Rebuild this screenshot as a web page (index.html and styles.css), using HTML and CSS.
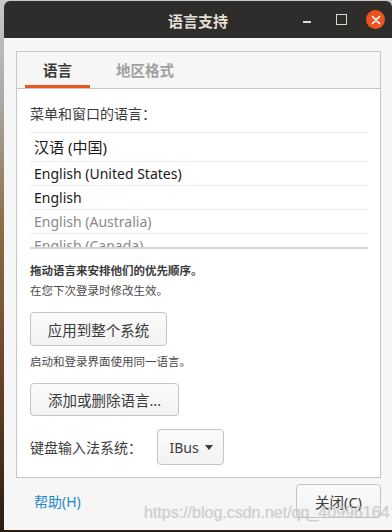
FILE: index.html
```html
<!DOCTYPE html>
<html lang="zh-CN">
<head>
    <meta charset="UTF-8">
    <meta name="viewport" content="width=device-width, initial-scale=1.0">
    <title>语言支持</title>
    <link rel="stylesheet" href="styles.css">
</head>
<body>
    <div class="window">
        <div class="titlebar">
            <div></div>
            <div class="title">语言支持</div>
            <div class="controls">
                <span class="ctl min"></span>
                <span class="ctl max"></span>
                <span class="ctl close">
                    <svg width="10" height="10" viewBox="0 0 10 10">
                        <path d="M1.5 1.5 L8.5 8.5 M8.5 1.5 L1.5 8.5" stroke="#fff" stroke-width="1.6" stroke-linecap="round"/>
                    </svg>
                </span>
            </div>
        </div>

        <div class="body">
            <div class="notebook">
                <div class="tabs">
                    <div class="tab active">语言</div>
                    <div class="tab">地区格式</div>
                </div>
                <div class="page">
                    <div class="label">菜单和窗口的语言：</div>
                    <div class="lang-list">
                        <div class="lang-row cjk">汉语 (中国)</div>
                        <div class="lang-row">English (United States)</div>
                        <div class="lang-row">English</div>
                        <div class="lang-row muted">English (Australia)</div>
                        <div class="lang-row muted">English (Canada)</div>
                    </div>
                    <div class="hint">
                        <div class="bold">拖动语言来安排他们的优先顺序。</div>
                        <div>在您下次登录时修改生效。</div>
                    </div>
                    <button class="btn apply">应用到整个系统</button>
                    <div class="hint note">启动和登录界面使用同一语言。</div>
                    <button class="btn add">添加或删除语言...</button>
                    <div class="im-row">
                        <span>键盘输入法系统：</span>
                        <button class="combo">IBus <span class="arrow"></span></button>
                    </div>
                </div>
            </div>

            <div class="actions">
                <a class="help">帮助(H)</a>
                <button class="btn close-btn">关闭(C)</button>
            </div>
        </div>

        <div class="watermark">https://blog.csdn.net/qq_40996164</div>
    </div>
</body>
</html>
```

FILE: styles.css
```css
* {
    box-sizing: border-box;
}

body {
    margin: 0;
    width: 392px;
    height: 532px;
    padding: 1px 0 2px 4px;
    overflow: hidden;
    background: linear-gradient(180deg, #c9c9c9 0%, #aaa79f 20%, #8d6c47 42%, #6a4526 70%, #2b1c10 100%);
    font-family: 'Noto Sans', 'Noto Sans CJK SC', sans-serif;
    color: #3c3c3c;
}

.window {
    position: relative;
    height: 100%;
    display: flex;
    flex-direction: column;
    background: #f6f6f6;
    border-radius: 6px 6px 0 0;
    overflow: hidden;
}

.titlebar {
    height: 37px;
    flex: none;
    background: #2f2d2c;
    display: grid;
    grid-template-columns: 1fr auto 1fr;
    align-items: center;
}

.title {
    color: #e2ded6;
    font-size: 15px;
    font-weight: bold;
    padding-top: 1px;
}

.controls {
    display: flex;
    justify-content: flex-end;
    align-items: center;
    gap: 16px;
    padding-right: 7px;
}

.ctl {
    width: 18px;
    height: 18px;
    display: flex;
    align-items: center;
    justify-content: center;
}

.ctl.min::after {
    content: '';
    width: 8px;
    height: 2px;
    margin-top: 5px;
    background: #dcd8d0;
}

.ctl.max::after {
    content: '';
    width: 9px;
    height: 9px;
    border: 1.5px solid #dcd8d0;
}

.ctl.close {
    width: 19px;
    height: 19px;
    border-radius: 50%;
    background: #e9541f;
}

.body {
    flex: 1;
    display: flex;
    flex-direction: column;
    padding: 13px 11px 0 12px;
}

.notebook {
    border: 1px solid #c6c6c6;
    background: #fff;
}

.tabs {
    height: 37px;
    display: flex;
    gap: 8px;
    padding-left: 8px;
    background: #f6f6f6;
    border-bottom: 1px solid #c6c6c6;
}

.tab {
    padding: 0 18px;
    font-size: 14.5px;
    font-weight: bold;
    color: #a0a0a0;
    display: flex;
    align-items: center;
    padding-top: 1px;
    border-bottom: 3px solid transparent;
}

.tab.active {
    color: #3c3c3c;
    border-bottom-color: #e9541f;
}

.page {
    padding: 14px 12px 12px 13px;
}

.label {
    font-size: 14px;
    line-height: 22px;
}

.lang-list {
    margin-top: 7px;
    height: 117px;
    overflow: hidden;
    border-top: 1px solid #eeeeee;
    border-bottom: 2px solid #d4d4d4;
}

.lang-row {
    height: 24px;
    padding-left: 4px;
    border-bottom: 1px solid #eeeeee;
    font-size: 14px;
    line-height: 23px;
    color: #1a1a1a;
}

.lang-row.cjk {
    height: 29px;
    line-height: 28px;
    font-size: 15px;
}

.lang-row.muted {
    color: #8a8a8a;
}

.hint {
    font-size: 11.5px;
    line-height: 20px;
    color: #4a4a4a;
    margin-top: 12px;
}

.hint .bold {
    font-weight: bold;
    color: #3a3a3a;
}

.hint.note {
    margin-top: 6px;
}

.btn {
    display: block;
    font-family: inherit;
    font-size: 14.5px;
    color: #3c3c3c;
    background: linear-gradient(180deg, #fbfbfb, #f2f2f2);
    border: 1px solid #c3c3c3;
    border-radius: 4px;
    padding: 0;
    margin-top: 11px;
}

.btn.apply {
    width: 137px;
    height: 34px;
}

.btn.add {
    width: 149px;
    height: 33px;
}

.im-row {
    margin-top: 13px;
    display: flex;
    align-items: center;
    gap: 15px;
    font-size: 14px;
}

.combo {
    width: 67px;
    height: 36px;
    font-family: inherit;
    font-size: 14px;
    color: #3c3c3c;
    background: linear-gradient(180deg, #fbfbfb, #f2f2f2);
    border: 1px solid #c3c3c3;
    border-radius: 4px;
    display: flex;
    align-items: center;
    justify-content: center;
    gap: 6px;
    padding: 0 0 0 1px;
}

.arrow {
    width: 0;
    height: 0;
    border-left: 4.5px solid transparent;
    border-right: 4.5px solid transparent;
    border-top: 5px solid #3c3c3c;
}

.actions {
    display: flex;
    justify-content: space-between;
    align-items: center;
    padding-top: 6px;
}

.help {
    color: #1f87c8;
    font-size: 14px;
    margin-left: 18px;
}

.btn.close-btn {
    width: 85px;
    height: 34px;
    margin-top: 0;
}

.watermark {
    position: absolute;
    left: 140px;
    top: 503px;
    font-family: 'Liberation Sans', sans-serif;
    font-size: 16px;
    color: rgba(205, 205, 205, 0.7);
    text-shadow: 0 0 1px rgba(150, 150, 150, 0.4);
    white-space: nowrap;
}
```
